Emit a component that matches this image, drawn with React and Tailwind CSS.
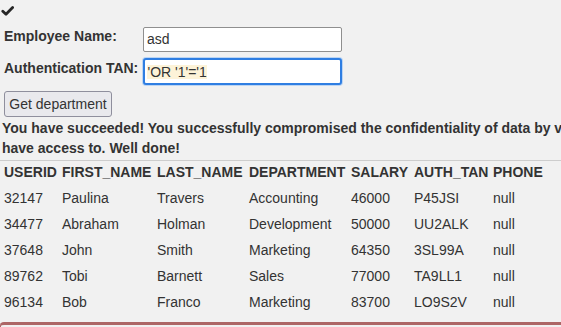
import React from "react";

const rows = [
  ["32147", "Paulina", "Travers", "Accounting", "46000", "P45JSI", "null"],
  ["34477", "Abraham", "Holman", "Development", "50000", "UU2ALK", "null"],
  ["37648", "John", "Smith", "Marketing", "64350", "3SL99A", "null"],
  ["89762", "Tobi", "Barnett", "Sales", "77000", "TA9LL1", "null"],
  ["96134", "Bob", "Franco", "Marketing", "83700", "LO9S2V", "null"],
];
const headers = ["USERID", "FIRST_NAME", "LAST_NAME", "DEPARTMENT", "SALARY", "AUTH_TAN", "PHONE"];
const widths = ["w-[58px]", "w-[95px]", "w-[92px]", "w-[102px]", "w-[63px]", "w-[79px]", "w-[64px]"];

export default function App() {
  return (
    <div className="w-[561px] h-[327px] overflow-hidden bg-[#f1f1f1] text-[#333] text-[14px] font-['Liberation_Sans',Arial,sans-serif]">
      <div className="pl-[1px] pt-[6px] h-[16px]">
        <svg viewBox="0 0 13 10" width="13" height="10" className="block">
          <polyline points="1.8,5.2 5,8.2 11.6,1.6" fill="none" stroke="#262626" strokeWidth="2.8" strokeLinecap="round" strokeLinejoin="round" />
        </svg>
      </div>

      <div className="mt-[11px] flex items-start">
        <div className="w-[143px] pl-[4px] pt-[1px] font-bold leading-[16px]">Employee Name:</div>
        <div className="w-[199px] h-[25px] border border-[#8f8f8f] rounded-[2px] bg-white px-[3px] leading-[23px] text-[14px] text-[#333]">
          asd
        </div>
      </div>

      <div className="mt-[6px] flex items-start">
        <div className="w-[143px] pl-[4px] pt-[2px] font-bold leading-[16px]">Authentication TAN:</div>
        <div className="w-[199px] h-[27px] border-2 border-[#2f7ee2] rounded-[3px] bg-white pl-[2px] shadow-[0_0_0_1px_#bcd5f3] flex items-center">
          <span className="bg-[#fdf3d8] leading-[14px] px-[0.5px] text-[#333]">'OR '1'='1</span>
        </div>
      </div>

      <div className="mt-[6px] pl-[4px]">
        <button className="w-[108px] h-[26px] bg-[#e9e9ed] border border-[#8f8f9d] rounded-[3px] text-[14px] text-[#333] leading-[16px] text-center">
          Get department
        </button>
      </div>

      <div className="mt-[2px] pl-[2px] font-bold leading-[19.5px] whitespace-nowrap">
        <div>You have succeeded! You successfully compromised the confidentiality of data by viewing internal information that you should not</div>
        <div>have access to. Well done!</div>
      </div>

      <div className="mt-[2px] border-t border-[#cdcdcd] pl-[4px]">
        <table className="border-collapse">
          <thead>
            <tr>
              {headers.map((h, i) => (
                <th key={h} className={`${widths[i]} p-0 pt-[3px] pb-[5px] text-left font-bold leading-[16px]`}>
                  {h}
                </th>
              ))}
            </tr>
          </thead>
          <tbody>
            {rows.map((r) => (
              <tr key={r[0]}>
                {r.map((c, i) => (
                  <td key={i} className="p-0 py-[5px] text-left leading-[16px]">
                    {c}
                  </td>
                ))}
              </tr>
            ))}
          </tbody>
        </table>
      </div>

      <div className="mt-[7px] h-[12px] border-t-[3px] border-l-[1px] border-[#ad6666] rounded-tl-[4px] bg-[#f1f1f1]"></div>
    </div>
  );
}
